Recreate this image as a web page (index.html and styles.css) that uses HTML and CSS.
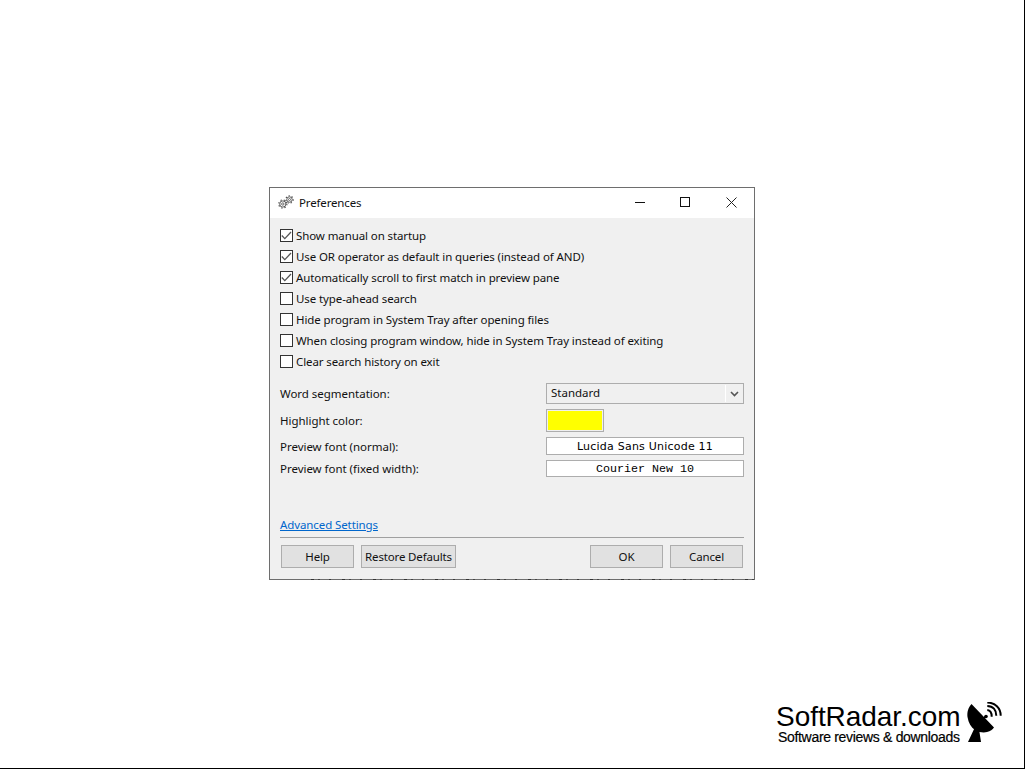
FILE: index.html
```html
<!DOCTYPE html>
<html lang="en">
<head>
<meta charset="utf-8">
<title>Preferences</title>
<link rel="stylesheet" href="styles.css">
</head>
<body>
<div class="dialog">
  <div class="titlebar">
    <svg class="gears" width="16" height="14" viewBox="0 0 16 14" fill="none" stroke="#4a4a4a">
      <circle cx="4.800" cy="9" r="3.100" stroke-width=".9"/>
      <circle cx="4.800" cy="9" r="4.100" stroke-width="1.100" stroke-dasharray="1.300 2"/>
      <circle cx="4.800" cy="9" r="1.200" stroke-width=".8"/>
      <circle cx="11.500" cy="4.500" r="2.700" stroke-width=".9"/>
      <circle cx="11.500" cy="4.500" r="3.700" stroke-width="1.100" stroke-dasharray="1.300 1.900"/>
      <circle cx="11.500" cy="4.500" r="1" stroke-width=".8"/>
    </svg>
    <span class="title">Preferences</span>
    <div class="winbtns">
      <svg width="10" height="10" viewBox="0 0 10 10" class="winbtn"><path d="M0 5.500H10" stroke="#111" fill="none"/></svg>
      <svg width="10" height="10" viewBox="0 0 10 10" class="winbtn"><rect x=".5" y=".5" width="9" height="9" stroke="#111" fill="none"/></svg>
      <svg width="11" height="11" viewBox="0 0 11 11" class="winbtn"><path d="M.5 .5L10.500 10.500M10.500 .5L.5 10.500" stroke="#222" fill="none"/></svg>
    </div>
  </div>
  <div class="content">
    <ul class="checks">
      <li class="check"><span class="box on"><svg width="11" height="9" viewBox="0 0 11 9"><path d="M.8 4.500L3.800 7.600L10 1" fill="none" stroke="#555" stroke-width="1.300"/></svg></span>Show manual on startup</li>
      <li class="check"><span class="box on"><svg width="11" height="9" viewBox="0 0 11 9"><path d="M.8 4.500L3.800 7.600L10 1" fill="none" stroke="#555" stroke-width="1.300"/></svg></span>Use OR operator as default in queries (instead of AND)</li>
      <li class="check"><span class="box on"><svg width="11" height="9" viewBox="0 0 11 9"><path d="M.8 4.500L3.800 7.600L10 1" fill="none" stroke="#555" stroke-width="1.300"/></svg></span>Automatically scroll to first match in preview pane</li>
      <li class="check"><span class="box"></span>Use type-ahead search</li>
      <li class="check"><span class="box"></span>Hide program in System Tray after opening files</li>
      <li class="check"><span class="box"></span>When closing program window, hide in System Tray instead of exiting</li>
      <li class="check"><span class="box"></span>Clear search history on exit</li>
    </ul>
    <div class="settings">
      <div class="row row-seg">
        <span class="label">Word segmentation:</span>
        <div class="select"><span class="select-value">Standard</span><span class="select-arrow"><svg width="9" height="6" viewBox="0 0 9 6"><path d="M1 1L4.500 4.500L8 1" fill="none" stroke="#555" stroke-width="1.600"/></svg></span></div>
      </div>
      <div class="row row-color">
        <span class="label">Highlight color:</span>
        <div class="field-wrap"><div class="swatch"><div class="swatch-fill"></div></div></div>
      </div>
      <div class="row row-font1">
        <span class="label">Preview font (normal):</span>
        <div class="fontbox sans">Lucida Sans Unicode 11</div>
      </div>
      <div class="row row-font2">
        <span class="label">Preview font (fixed width):</span>
        <div class="fontbox mono">Courier New 10</div>
      </div>
    </div>
    <a class="advanced" href="#">Advanced Settings</a>
    <div class="footer">
      <button class="btn btn-help">Help</button>
      <button class="btn btn-restore">Restore Defaults</button>
      <span class="spacer"></span>
      <button class="btn btn-ok">OK</button>
      <button class="btn btn-cancel">Cancel</button>
    </div>
  </div>
</div>
<div class="brand">
  <div class="brand-text">
    <div class="brand-name">SoftRadar.com</div>
    <div class="brand-sub">Software reviews &amp; downloads</div>
  </div>
  <svg class="dish" width="36" height="42" viewBox="0 0 36 42">
    <path d="M4.500 2C1 6 0 10 .5 15C1.500 21 4 25.500 8 28C12 30.500 17 31 20 30C23.500 29.500 25.500 27.500 27 25.500Z" fill="#000"/>
    <path d="M8 25L1 40H14L12 27Z" fill="#000"/>
    <path d="M14 18L19 14.500" stroke="#000" stroke-width="2"/>
    <circle cx="19" cy="14.500" r="1.800" fill="#000"/>
    <g fill="none" stroke="#000" stroke-width="2">
      <path d="M20.300 8C23 8.300 24.700 11 24.700 14.700"/>
      <path d="M20.300 4C26 4.200 29.300 8 29.300 13.700"/>
      <path d="M20.300 0.500C28 0.700 33.700 6 33.700 13.700"/>
    </g>
  </svg>
</div>
</body>
</html>
```
FILE: styles.css
```css
html, body { margin: 0; padding: 0; background: #fff; }
body {
  position: relative;
  width: 1025px;
  height: 769px;
  overflow: hidden;
  font-family: "Noto Sans", "Open Sans", sans-serif;
  font-size: 11.5px;
  color: #111;
  box-sizing: border-box;
  border-bottom: 1px solid #000;
  border-right: 1px solid #000;
}
.dialog {
  position: absolute;
  left: 269px;
  top: 187px;
  width: 486px;
  height: 393px;
  box-sizing: border-box;
  border: 1px solid #6e6e6e;
  background: #f0f0f0;
  display: flex;
  flex-direction: column;
}
.dialog::after {
  content: "";
  position: absolute;
  left: 41px;
  right: 0;
  bottom: -1px;
  height: 1px;
  background: repeating-linear-gradient(90deg, #333 0 3px, transparent 3px 7px, #444 7px 9px, transparent 9px 18px, #3a3a3a 18px 20px, transparent 20px 31px);
}
.titlebar {
  height: 30px;
  background: #fff;
  display: flex;
  align-items: center;
  padding-left: 8px;
  padding-bottom: 2px;
  box-sizing: border-box;
  flex: none;
}
.gears { margin-right: 5px; }
.title { letter-spacing: -.15px; }
.winbtns {
  margin-left: auto;
  display: flex;
  align-items: center;
}
.winbtn { display: block; }
.winbtn:nth-child(1) { margin-right: 35px; }
.winbtn:nth-child(2) { margin-right: 36px; }
.winbtn:nth-child(3) { margin-right: 17px; }
.content {
  flex: 1;
  padding: 7px 10px 0 10px;
  display: flex;
  flex-direction: column;
}
.checks { list-style: none; margin: 0; padding: 0; }
.check {
  height: 21px;
  display: flex;
  align-items: center;
  white-space: nowrap;
  letter-spacing: -.1px;
}
.box {
  width: 13px;
  height: 13px;
  box-sizing: border-box;
  border: 1px solid #333;
  background: #fff;
  margin-right: 3px;
  display: flex;
  align-items: center;
  justify-content: center;
  flex: none;
}
.settings { margin-top: 11px; display: flex; flex-direction: column; }
.row { display: flex; align-items: center; justify-content: space-between; }
.label { letter-spacing: -.03px; }
.row-seg { height: 21px; }
.row-color { height: 23px; margin-top: 5px; }
.row-font1 { height: 18px; margin-top: 5px; }
.row-font2 { height: 17px; margin-top: 5px; }
.select {
  width: 198px;
  height: 21px;
  box-sizing: border-box;
  border: 1px solid #adadad;
  background: #f0f0f0;
  display: flex;
  align-items: center;
}
.select-value { flex: 1; padding-left: 4px; height: 17px; line-height: 16px; }
.select-arrow {
  width: 17px;
  height: 17px;
  border-left: 1px solid #fff;
  display: flex;
  align-items: center;
  justify-content: center;
}
.field-wrap { width: 198px; }
.swatch {
  width: 58px;
  height: 23px;
  box-sizing: border-box;
  border: 1px solid #adadad;
  background: #f0f0f0;
  padding: 1px;
}
.swatch-fill { height: 100%; background: #ff0; }
.fontbox {
  width: 198px;
  box-sizing: border-box;
  border: 1px solid #adadad;
  background: #fff;
  text-align: center;
  height: 100%;
  line-height: 16px;
  color: #000;
}
.sans { font-family: "DejaVu Sans", sans-serif; font-size: 11px; letter-spacing: .22px; line-height: 17px; }
.mono { font-family: "Liberation Mono", monospace; font-size: 11.67px; line-height: 16px; }
.advanced {
  color: #0066cc;
  text-decoration: underline;
  margin-top: 40px;
  line-height: 16px;
  height: 16px;
  align-self: flex-start;
  letter-spacing: -.1px;
}
.footer {
  margin-top: 4px;
  border-top: 1px solid #a0a0a0;
  padding: 7px 1px 0;
  display: flex;
  gap: 7px;
}
.btn {
  height: 23px;
  box-sizing: border-box;
  border: 1px solid #adadad;
  background: #e1e1e1;
  font: inherit;
  color: #111;
  padding: 0;
  letter-spacing: -.15px;
}
.btn-help, .btn-ok, .btn-cancel { width: 73px; }
.btn-restore { width: 95px; }
.spacer { flex: 1; }
.brand {
  position: absolute;
  left: 776px;
  top: 702px;
  display: flex;
  align-items: flex-start;
}
.brand-text { font-family: "Liberation Sans", Arial, sans-serif; color: #000; }
.brand-name { font-size: 28px; line-height: 28px; margin-top: 1px; letter-spacing: -.05px; }
.brand-sub { font-size: 14px; line-height: 13px; margin-left: 2px; letter-spacing: -.32px; -webkit-text-stroke: .2px #000; }
.dish { margin-left: 6px; }
```
